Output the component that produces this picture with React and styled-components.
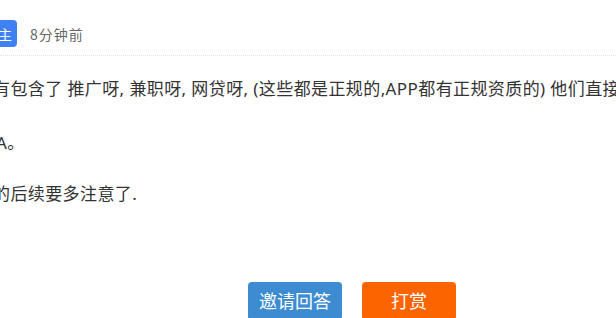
import styled, { createGlobalStyle } from 'styled-components';

const GlobalStyle = createGlobalStyle`
  html, body {
    margin: 0;
    padding: 0;
    background: #fff;
    overflow: hidden;
  }
  body {
    font-family: "Noto Sans", "Noto Sans CJK SC", sans-serif;
    color: #333;
  }
`;

const Page = styled.div`
  width: 616px;
  height: 318px;
  overflow: hidden;
`;

const Header = styled.div`
  display: flex;
  align-items: center;
  gap: 13px;
  margin-top: 20px;
  height: 27px;
  padding-bottom: 8px;
  border-bottom: 1px dotted #e6e6e6;
`;

const Badge = styled.span`
  display: inline-flex;
  align-items: center;
  height: 27px;
  margin-left: -21px;
  padding: 0 5px;
  border-radius: 4px;
  background: #3f80f3;
  color: #fff;
  font-size: 14px;
  font-family: "Noto Sans CJK SC", sans-serif;
`;

const Time = styled.span`
  font-size: 14px;
  letter-spacing: 1px;
  color: #666;
  font-family: "Noto Sans CJK SC", sans-serif;
`;

const Body = styled.div`
  padding-top: 20px;
`;

const Line = styled.p`
  margin: 0 0 ${p => p.$gap}px ${p => p.$shift}px;
  font-size: 17px;
  letter-spacing: 0.4px;
  line-height: 26px;
  white-space: nowrap;
`;

const Actions = styled.div`
  display: flex;
  gap: 20px;
  margin-top: 75px;
  padding-left: 248px;
`;

const Button = styled.button`
  width: 94px;
  height: 38px;
  border: none;
  border-radius: 4px;
  background: ${p => p.$color};
  color: #fff;
  font-size: 18px;
  font-family: "Noto Sans CJK SC", sans-serif;
  padding: 0;
  padding-bottom: 2px;
  cursor: pointer;
`;

export default function App() {
  return (
    <Page>
      <GlobalStyle />
      <Header>
        <Badge>楼主</Badge>
        <Time>8分钟前</Time>
      </Header>
      <Body>
        <Line $shift={-7} $gap={28}>
          有包含了 推广呀, 兼职呀, 网贷呀, (这些都是正规的,APP都有正规资质的) 他们直接
        </Line>
        <Line $shift={-4} $gap={25}>A。</Line>
        <Line $shift={-7} $gap={0}>的后续要多注意了.</Line>
      </Body>
      <Actions>
        <Button $color="#3d8bd1">邀请回答</Button>
        <Button $color="#fc6400">打赏</Button>
      </Actions>
    </Page>
  );
}
